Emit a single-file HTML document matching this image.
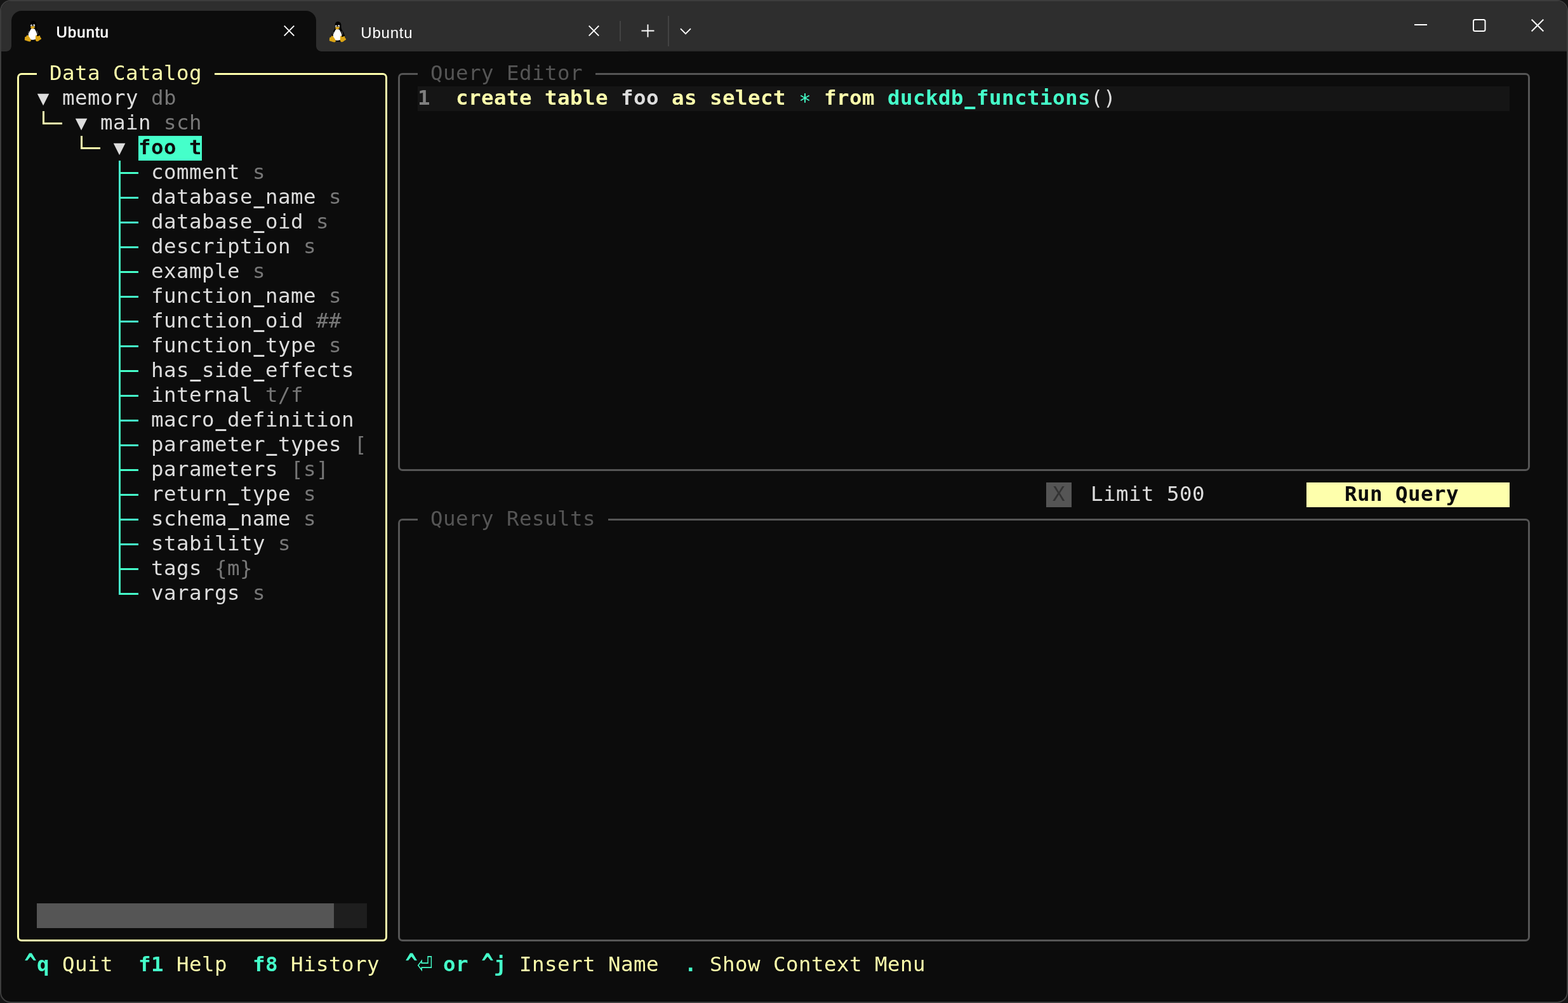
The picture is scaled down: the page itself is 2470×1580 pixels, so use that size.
<!DOCTYPE html>
<html lang="en"><head><meta charset="utf-8"><title>Ubuntu</title>
<style>
html,body{margin:0;padding:0;background:#151515;}
body{width:2470px;height:1580px;overflow:hidden;position:relative;}
#win{position:absolute;left:0;top:0;width:2470px;height:1580px;box-sizing:border-box;border:2px solid #3d3d3d;border-radius:17px;background:#0C0C0C;overflow:hidden;}
#inner{position:absolute;left:-2px;top:-2px;width:2470px;height:1580px;will-change:transform;}
#bar{position:absolute;left:0;top:0;width:2470px;height:81px;background:#2e2e2e;}
#tab1{position:absolute;left:18px;top:17px;width:480px;height:64px;background:#0C0C0C;border-radius:16px 16px 0 0;}
.fl{position:absolute;top:73px;width:8px;height:8px;}
#fl1{left:10px;background:radial-gradient(circle at 0 0,rgba(12,12,12,0) 7.4px,#0C0C0C 8.1px);}
#fl2{left:498px;background:radial-gradient(circle at 8px 0,rgba(12,12,12,0) 7.4px,#0C0C0C 8.1px);}
.tux{position:absolute;}
.tt{position:absolute;font-family:"Liberation Sans","DejaVu Sans",sans-serif;font-size:24px;line-height:30px;color:#fff;white-space:pre;letter-spacing:0.45px;}
.ic{position:absolute;overflow:visible;}
.sep{position:absolute;width:2px;background:#434343;}
#term{position:absolute;left:0;top:0;width:2470px;height:1580px;font-family:"DejaVu Sans Mono","Liberation Mono",monospace;font-size:32.5px;}
.t{position:absolute;height:39px;line-height:39px;white-space:pre;letter-spacing:0.4333px;overflow:visible;}
.t i{font-style:normal;display:inline-block;height:39px;transform:translateY(-0.7px);}
.t u{display:inline-block;text-decoration:none;width:20px;letter-spacing:0;text-align:center;transform-origin:50% 100%;transform:translateY(0.5px) scale(.86,2.3);}
.t[style*="bold"] u{transform:translateY(-0.5px) scale(.86,1.3);}
.t b{display:inline-block;font-weight:inherit;width:20px;letter-spacing:0;text-align:center;transform-origin:50% 50%;}
.t b.c{transform:translateY(-0.5px) scale(1,1.3);}
.t b.e{font-weight:normal;transform:translate(1.2px,-2px) scale(1.23,1.6);}
.t b.a{transform:translateY(5px);}
.r{position:absolute;}
.f{position:absolute;box-sizing:border-box;border:3px solid;border-radius:7px;}
.tri{position:absolute;width:20px;height:39px;line-height:39px;font-size:31px;text-align:center;margin-top:-1px;}
</style></head>
<body>
<div id="win"><div id="inner">
<div id="bar"></div><div class="r" style="left:990px;top:79px;width:1478px;height:2px;background:#2a2a2a;"></div>
<div id="tab1"></div><div class="fl" id="fl1"></div><div class="fl" id="fl2"></div>
<svg class="tux" style="left:32px;top:29px" viewBox="0 0 40 42" width="40" height="42">
<path d="M20.3 4c-3 0-4.6 2.4-4.6 5.6 0 2 .3 3.600-.4 5.400-1.200 3-4.800 6.600-4.900 11.600 0 2.500.8 4.500 2.200 6.200l1.400 2.300 11.800.6 2.200-1c2.200-1.800 3.200-4.400 3-7.800-.3-4.400-3.800-8-5-11.400-.7-2-.3-3.800-.5-6C25.200 6.400 23.400 4 20.300 4z" fill="#000"/>
<path d="M20 16.200c-1.400 0-2.700-.6-3.300.6-.8 1.700-3.900 6.200-4 10.400 0 4 2.500 6.600 7.400 6.600 4.600 0 7-2.800 6.600-7.200-.3-3.800-3-7.600-3.800-9.600-.4-1-1.500-.8-2.900-.8z" fill="#fff"/>
<ellipse cx="17.500" cy="11.200" rx="1.300" ry="1.700" fill="#fff"/><ellipse cx="21.600" cy="11.100" rx="1.500" ry="1.800" fill="#fff"/>
<circle cx="17.900" cy="11.600" r=".6" fill="#000"/><circle cx="21.300" cy="11.600" r=".7" fill="#000"/>
<path d="M16.200 13.600c1-.8 2.200-1.700 3.200-1.700s2.500.9 3.600 1.500c.5.300.3.900-.2 1.200-1 .7-2.400 1.800-3.600 1.800-1.100 0-2.300-1-3-1.700-.4-.4-.4-.8 0-1.100z" fill="#DBA516"/>
<path d="M10.500 26.400c1.200-.3 2 .5 2.900 1.800.9 1.400 2.300 3.200 3.200 5 .8 1.600-.2 3.400-2 3.300-1.900-.1-4.300-1.300-6.200-1.700-1.500-.3-1.900-1-1.500-2.200.3-.9.100-1.600.2-2.500.1-1.100 1.100-1 2-1.500.7-.4.800-2 1.400-2.200z" fill="#DBA516"/>
<path d="M24.800 26.600c.9-.2 1.500 .6 2.600 .8 1.300.2 2.300-1 3.200-.3.800.600.500 1.700 1 2.600.500.8 1.700 1.300 1.500 2.300-.2 1-1.800 1.500-3.200 2.600-1.300 1-2.300 2-3.900 1.700-1.600-.3-2.300-1.800-2.200-3.500.1-1.900.2-3.500.2-4.900 0-.8.200-1.400.8-1.500z" fill="#DBA516"/>
<ellipse cx="27.400" cy="27.100" rx="1.500" ry="1" fill="#000"/>
<path d="M13.200 20.200L12.300 24.600M26.400 19.600L27.800 24.200" stroke="#9a9a9a" stroke-width=".7" fill="none" stroke-linecap="round"/>
</svg>
<div class="tt" style="left:88.500px;top:36px;letter-spacing:1px;-webkit-text-stroke:0.7px #fff;">Ubuntu</div>
<svg class="ic" style="left:447px;top:40px" width="17" height="17" viewBox="0 0 17 17"><path d="M0.7 0.7L16.3 16.3M16.3 0.7L0.7 16.3" stroke="#fff" stroke-width="1.9" fill="none"/></svg>
<svg class="tux" style="left:512px;top:30px" viewBox="0 0 40 42" width="40" height="42">
<path d="M20.3 4c-3 0-4.6 2.4-4.6 5.6 0 2 .3 3.600-.4 5.400-1.200 3-4.800 6.600-4.900 11.600 0 2.500.8 4.500 2.200 6.200l1.400 2.300 11.800.6 2.200-1c2.200-1.800 3.200-4.400 3-7.800-.3-4.400-3.800-8-5-11.400-.7-2-.3-3.800-.5-6C25.200 6.400 23.400 4 20.300 4z" fill="#000"/>
<path d="M20 16.200c-1.400 0-2.700-.6-3.300.6-.8 1.700-3.900 6.200-4 10.400 0 4 2.500 6.600 7.400 6.600 4.600 0 7-2.800 6.600-7.200-.3-3.800-3-7.600-3.800-9.600-.4-1-1.500-.8-2.900-.8z" fill="#fff"/>
<ellipse cx="17.500" cy="11.200" rx="1.300" ry="1.700" fill="#fff"/><ellipse cx="21.600" cy="11.100" rx="1.500" ry="1.800" fill="#fff"/>
<circle cx="17.900" cy="11.600" r=".6" fill="#000"/><circle cx="21.300" cy="11.600" r=".7" fill="#000"/>
<path d="M16.200 13.600c1-.8 2.200-1.700 3.200-1.700s2.500.9 3.600 1.500c.5.300.3.900-.2 1.200-1 .7-2.400 1.800-3.600 1.800-1.100 0-2.300-1-3-1.700-.4-.4-.4-.8 0-1.100z" fill="#DBA516"/>
<path d="M10.500 26.400c1.200-.3 2 .5 2.900 1.800.9 1.400 2.300 3.200 3.200 5 .8 1.600-.2 3.400-2 3.300-1.900-.1-4.300-1.300-6.200-1.700-1.500-.3-1.900-1-1.500-2.200.3-.9.100-1.600.2-2.500.1-1.100 1.100-1 2-1.500.7-.4.800-2 1.400-2.200z" fill="#DBA516"/>
<path d="M24.800 26.600c.9-.2 1.500 .6 2.600 .8 1.300.2 2.300-1 3.200-.3.800.600.500 1.700 1 2.600.500.8 1.700 1.300 1.500 2.300-.2 1-1.800 1.500-3.200 2.600-1.300 1-2.300 2-3.900 1.700-1.600-.3-2.300-1.800-2.200-3.500.1-1.900.2-3.500.2-4.900 0-.8.200-1.400.8-1.500z" fill="#DBA516"/>
<ellipse cx="27.400" cy="27.100" rx="1.500" ry="1" fill="#000"/>
<path d="M13.200 20.200L12.300 24.600M26.400 19.600L27.800 24.200" stroke="#9a9a9a" stroke-width=".7" fill="none" stroke-linecap="round"/>
</svg>
<div class="tt" style="left:568.300px;top:37px;letter-spacing:0.8px;">Ubuntu</div>
<svg class="ic" style="left:927px;top:40px" width="17" height="17" viewBox="0 0 17 17"><path d="M0.7 0.7L16.3 16.3M16.3 0.7L0.7 16.3" stroke="#fff" stroke-width="1.9" fill="none"/></svg>
<div class="sep" style="left:976px;top:33px;height:32px;"></div>
<svg class="ic" style="left:1009.700px;top:37.600px" width="21" height="21" viewBox="0 0 21 21"><path d="M10.5 0.5V20.5M0.5 10.5H20.5" stroke="#fff" stroke-width="1.9" fill="none"/></svg>
<div class="sep" style="left:1052px;top:25px;height:48px;"></div>
<svg class="ic" style="left:1071px;top:44px" width="18" height="11" viewBox="0 0 18 11"><path d="M1 1.200L9 9.200L17 1.200" stroke="#fff" stroke-width="1.9" fill="none"/></svg>
<svg class="ic" style="left:2228px;top:37px" width="20" height="4" viewBox="0 0 20 4"><path d="M0 2H20" stroke="#fff" stroke-width="2" fill="none"/></svg>
<svg class="ic" style="left:2319px;top:29px" width="22" height="22" viewBox="0 0 22 22"><rect x="2" y="2" width="18.500" height="18" rx="2.500" stroke="#fff" stroke-width="2" fill="none"/></svg>
<svg class="ic" style="left:2412px;top:30px" width="20" height="20" viewBox="0 0 20 20"><path d="M0.7 0.7L19.3 19.3M19.3 0.7L0.7 19.3" stroke="#fff" stroke-width="2" fill="none"/></svg>
<div id="term">
<div class="f" style="left:27px;top:115px;width:583px;height:1368px;border-color:#FEFFAC;"></div>
<div class="r" style="left:58px;top:113px;width:280px;height:8px;background:#0C0C0C;"></div>
<span class="t" style="left:78px;top:97px;color:#FEFFAC;"><i>Data Catalog</i></span>
<span class="tri" style="left:58px;top:136px;color:#DDDDDD;">▼</span>
<span class="t" style="left:98px;top:136px;color:#DDDDDD;"><i>memory</i></span>
<span class="t" style="left:238px;top:136px;color:#777777;"><i>db</i></span>
<div class="r" style="left:67px;top:175px;width:3px;height:21px;background:#FEFFAC;"></div>
<div class="r" style="left:67px;top:193px;width:31px;height:3px;background:#FEFFAC;"></div>
<span class="tri" style="left:118px;top:175px;color:#DDDDDD;">▼</span>
<span class="t" style="left:158px;top:175px;color:#DDDDDD;"><i>main</i></span>
<span class="t" style="left:258px;top:175px;color:#777777;"><i>sch</i></span>
<div class="r" style="left:127px;top:214px;width:3px;height:21px;background:#FEFFAC;"></div>
<div class="r" style="left:127px;top:232px;width:31px;height:3px;background:#FEFFAC;"></div>
<span class="tri" style="left:178px;top:214px;color:#DDDDDD;">▼</span>
<span class="t" style="left:218px;top:214px;color:#0C0C0C;font-weight:bold;background:#45FFCA;width:100px;"><i>foo t</i></span>
<div class="r" style="left:187px;top:271px;width:31px;height:3px;background:#45FFCA;"></div>
<span class="t" style="left:238px;top:253px;color:#DDDDDD;"><i>comment</i></span>
<span class="t" style="left:398px;top:253px;color:#777777;"><i>s</i></span>
<div class="r" style="left:187px;top:310px;width:31px;height:3px;background:#45FFCA;"></div>
<span class="t" style="left:238px;top:292px;color:#DDDDDD;"><i>database<u>_</u>name</i></span>
<span class="t" style="left:518px;top:292px;color:#777777;"><i>s</i></span>
<div class="r" style="left:187px;top:349px;width:31px;height:3px;background:#45FFCA;"></div>
<span class="t" style="left:238px;top:331px;color:#DDDDDD;"><i>database<u>_</u>oid</i></span>
<span class="t" style="left:498px;top:331px;color:#777777;"><i>s</i></span>
<div class="r" style="left:187px;top:388px;width:31px;height:3px;background:#45FFCA;"></div>
<span class="t" style="left:238px;top:370px;color:#DDDDDD;"><i>description</i></span>
<span class="t" style="left:478px;top:370px;color:#777777;"><i>s</i></span>
<div class="r" style="left:187px;top:427px;width:31px;height:3px;background:#45FFCA;"></div>
<span class="t" style="left:238px;top:409px;color:#DDDDDD;"><i>example</i></span>
<span class="t" style="left:398px;top:409px;color:#777777;"><i>s</i></span>
<div class="r" style="left:187px;top:466px;width:31px;height:3px;background:#45FFCA;"></div>
<span class="t" style="left:238px;top:448px;color:#DDDDDD;"><i>function<u>_</u>name</i></span>
<span class="t" style="left:518px;top:448px;color:#777777;"><i>s</i></span>
<div class="r" style="left:187px;top:505px;width:31px;height:3px;background:#45FFCA;"></div>
<span class="t" style="left:238px;top:487px;color:#DDDDDD;"><i>function<u>_</u>oid</i></span>
<span class="t" style="left:498px;top:487px;color:#777777;"><i>##</i></span>
<div class="r" style="left:187px;top:544px;width:31px;height:3px;background:#45FFCA;"></div>
<span class="t" style="left:238px;top:526px;color:#DDDDDD;"><i>function<u>_</u>type</i></span>
<span class="t" style="left:518px;top:526px;color:#777777;"><i>s</i></span>
<div class="r" style="left:187px;top:583px;width:31px;height:3px;background:#45FFCA;"></div>
<span class="t" style="left:238px;top:565px;color:#DDDDDD;"><i>has<u>_</u>side<u>_</u>effects</i></span>
<div class="r" style="left:187px;top:622px;width:31px;height:3px;background:#45FFCA;"></div>
<span class="t" style="left:238px;top:604px;color:#DDDDDD;"><i>internal</i></span>
<span class="t" style="left:418px;top:604px;color:#777777;"><i>t/f</i></span>
<div class="r" style="left:187px;top:661px;width:31px;height:3px;background:#45FFCA;"></div>
<span class="t" style="left:238px;top:643px;color:#DDDDDD;"><i>macro<u>_</u>definition</i></span>
<div class="r" style="left:187px;top:700px;width:31px;height:3px;background:#45FFCA;"></div>
<span class="t" style="left:238px;top:682px;color:#DDDDDD;"><i>parameter<u>_</u>types</i></span>
<span class="t" style="left:558px;top:682px;color:#777777;"><i>[</i></span>
<div class="r" style="left:187px;top:739px;width:31px;height:3px;background:#45FFCA;"></div>
<span class="t" style="left:238px;top:721px;color:#DDDDDD;"><i>parameters</i></span>
<span class="t" style="left:458px;top:721px;color:#777777;"><i>[s]</i></span>
<div class="r" style="left:187px;top:778px;width:31px;height:3px;background:#45FFCA;"></div>
<span class="t" style="left:238px;top:760px;color:#DDDDDD;"><i>return<u>_</u>type</i></span>
<span class="t" style="left:478px;top:760px;color:#777777;"><i>s</i></span>
<div class="r" style="left:187px;top:817px;width:31px;height:3px;background:#45FFCA;"></div>
<span class="t" style="left:238px;top:799px;color:#DDDDDD;"><i>schema<u>_</u>name</i></span>
<span class="t" style="left:478px;top:799px;color:#777777;"><i>s</i></span>
<div class="r" style="left:187px;top:856px;width:31px;height:3px;background:#45FFCA;"></div>
<span class="t" style="left:238px;top:838px;color:#DDDDDD;"><i>stability</i></span>
<span class="t" style="left:438px;top:838px;color:#777777;"><i>s</i></span>
<div class="r" style="left:187px;top:895px;width:31px;height:3px;background:#45FFCA;"></div>
<span class="t" style="left:238px;top:877px;color:#DDDDDD;"><i>tags</i></span>
<span class="t" style="left:338px;top:877px;color:#777777;"><i>{m}</i></span>
<div class="r" style="left:187px;top:934px;width:31px;height:3px;background:#45FFCA;"></div>
<span class="t" style="left:238px;top:916px;color:#DDDDDD;"><i>varargs</i></span>
<span class="t" style="left:398px;top:916px;color:#777777;"><i>s</i></span>
<div class="r" style="left:187px;top:253px;width:3px;height:684px;background:#45FFCA;"></div>
<div class="r" style="left:58px;top:1423px;width:520px;height:39px;background:#1E1E1E;"></div>
<div class="r" style="left:58px;top:1423px;width:468px;height:39px;background:#555555;"></div>
<div class="f" style="left:627px;top:115px;width:1783px;height:627px;border-color:#555555;"></div>
<div class="r" style="left:658px;top:113px;width:280px;height:8px;background:#0C0C0C;"></div>
<span class="t" style="left:678px;top:97px;color:#555555;"><i>Query Editor</i></span>
<div class="r" style="left:658px;top:136px;width:1720px;height:39px;background:#151515;"></div>
<span class="t" style="left:658px;top:136px;color:#808080;font-weight:bold;"><i>1</i></span>
<span class="t" style="left:718px;top:136px;color:#FEFFAC;font-weight:bold;"><i>create</i></span>
<span class="t" style="left:858px;top:136px;color:#FEFFAC;font-weight:bold;"><i>table</i></span>
<span class="t" style="left:978px;top:136px;color:#DDDDDD;font-weight:bold;"><i>foo</i></span>
<span class="t" style="left:1058px;top:136px;color:#FEFFAC;font-weight:bold;"><i>as</i></span>
<span class="t" style="left:1118px;top:136px;color:#FEFFAC;font-weight:bold;"><i>select</i></span>
<span class="t" style="left:1258px;top:136px;color:#45FFCA;"><i><b class="a">*</b></i></span>
<span class="t" style="left:1298px;top:136px;color:#FEFFAC;font-weight:bold;"><i>from</i></span>
<span class="t" style="left:1398px;top:136px;color:#45FFCA;font-weight:bold;"><i>duckdb<u>_</u>functions</i></span>
<span class="t" style="left:1718px;top:136px;color:#DDDDDD;"><i>()</i></span>
<div class="r" style="left:1648px;top:760px;width:40px;height:39px;background:#555555;"></div>
<span class="t" style="left:1658px;top:760px;color:#333333;"><i>X</i></span>
<span class="t" style="left:1718px;top:760px;color:#DDDDDD;"><i>Limit 500</i></span>
<span class="t" style="left:2058px;top:760px;color:#0C0C0C;font-weight:bold;background:#FEFFAC;width:320px;"><i>   Run Query    </i></span>
<div class="f" style="left:627px;top:817px;width:1783px;height:666px;border-color:#555555;"></div>
<div class="r" style="left:658px;top:815px;width:300px;height:8px;background:#0C0C0C;"></div>
<span class="t" style="left:678px;top:799px;color:#555555;"><i>Query Results</i></span>
<span class="t" style="left:38px;top:1501px;color:#45FFCA;font-weight:bold;"><i><b class="c">^</b>q</i></span>
<span class="t" style="left:98px;top:1501px;color:#FEFFAC;"><i>Quit</i></span>
<span class="t" style="left:218px;top:1501px;color:#45FFCA;font-weight:bold;"><i>f1</i></span>
<span class="t" style="left:278px;top:1501px;color:#FEFFAC;"><i>Help</i></span>
<span class="t" style="left:398px;top:1501px;color:#45FFCA;font-weight:bold;"><i>f8</i></span>
<span class="t" style="left:458px;top:1501px;color:#FEFFAC;"><i>History</i></span>
<span class="t" style="left:638px;top:1501px;color:#45FFCA;font-weight:bold;"><i><b class="c">^</b><b class="e">⏎</b> or <b class="c">^</b>j</i></span>
<span class="t" style="left:818px;top:1501px;color:#FEFFAC;"><i>Insert Name</i></span>
<span class="t" style="left:1078px;top:1501px;color:#45FFCA;font-weight:bold;"><i>.</i></span>
<span class="t" style="left:1118px;top:1501px;color:#FEFFAC;"><i>Show Context Menu</i></span>
</div>
</div></div>
</body></html>
